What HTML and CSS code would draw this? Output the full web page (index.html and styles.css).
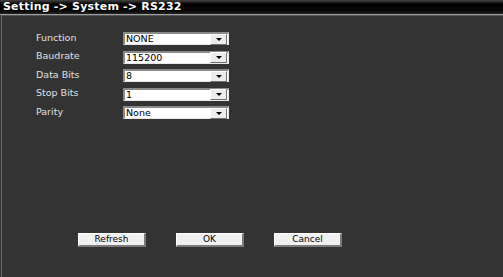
FILE: index.html
```html
<!DOCTYPE html>
<html lang="en">
<head>
    <meta charset="UTF-8">
    <title>Setting - System - RS232</title>
    <link rel="stylesheet" href="styles.css">
</head>
<body>
    <div class="title">Setting -&gt; System -&gt; RS232</div>
    <div class="panel">
        <div class="form">
            <div class="row">
                <label>Function</label>
                <div class="select"><span class="value">NONE</span><span class="arrow"></span></div>
            </div>
            <div class="row">
                <label>Baudrate</label>
                <div class="select"><span class="value">115200</span><span class="arrow"></span></div>
            </div>
            <div class="row">
                <label>Data Bits</label>
                <div class="select"><span class="value">8</span><span class="arrow"></span></div>
            </div>
            <div class="row">
                <label>Stop Bits</label>
                <div class="select"><span class="value">1</span><span class="arrow"></span></div>
            </div>
            <div class="row">
                <label>Parity</label>
                <div class="select"><span class="value">None</span><span class="arrow"></span></div>
            </div>
        </div>
        <div class="buttons">
            <button type="button">Refresh</button>
            <button type="button">OK</button>
            <button type="button">Cancel</button>
        </div>
    </div>
</body>
</html>
```
FILE: styles.css
```css
body, html {
    margin: 0;
    padding: 0;
    background: #333333;
    font-family: "DejaVu Sans", Verdana, sans-serif;
}
.title {
    height: 14px;
    line-height: 14px;
    padding-left: 3px;
    background: linear-gradient(#444444, #000000 30%, #0a0a0a 80%, #222222);
    border-bottom: 1px solid #a0a0a0;
    color: #ffffff;
    font-size: 11px;
    font-weight: bold;
    letter-spacing: 0.2px;
    text-shadow: 1px 1px 0 #000000;
}
.panel {
    height: 262px;
    margin-left: 1px;
    border-top: 1px solid #555555;
    border-left: 1px solid #6a6a6a;
    box-sizing: border-box;
    display: flex;
    flex-direction: column;
}
.form {
    padding: 16px 0 0 34px;
    display: flex;
    flex-direction: column;
    gap: 5.5px;
}
.row {
    display: flex;
    align-items: center;
    height: 13px;
}
.row label {
    width: 87px;
    color: #e0e0e0;
    font-size: 9.5px;
    margin-top: -3px;
}
.select {
    width: 106px;
    height: 13px;
    box-sizing: border-box;
    background: #ffffff;
    border-top: 2px solid #8a8a8a;
    border-left: 2px solid #8a8a8a;
    border-right: 1px solid #e8e8e8;
    border-bottom: 1px solid #e8e8e8;
    display: flex;
    align-items: center;
}
.select .value {
    flex: 1;
    padding-left: 1px;
    font-size: 9.5px;
    color: #000000;
    line-height: 10px;
}
.select .arrow {
    width: 15px;
    height: 9px;
    margin-right: 1px;
    background: #ececec;
    border-top: 1px solid #ffffff;
    border-left: 1px solid #ffffff;
    border-right: 1px solid #707070;
    border-bottom: 1px solid #707070;
    position: relative;
}
.select .arrow::after {
    content: "";
    position: absolute;
    left: 5px;
    top: 3px;
    border-left: 3px solid transparent;
    border-right: 3px solid transparent;
    border-top: 3px solid #000000;
}
.buttons {
    margin-top: auto;
    margin-bottom: 30px;
    padding-left: 76px;
    display: flex;
    gap: 30px;
}
.buttons button {
    width: 68px;
    height: 14px;
    padding: 0;
    background: #f0f0f0;
    border-top: 1px solid #ffffff;
    border-left: 1px solid #ffffff;
    border-right: 2px solid #7a7a7a;
    border-bottom: 2px solid #7a7a7a;
    font-family: "DejaVu Sans", Verdana, sans-serif;
    font-size: 9px;
    line-height: 9px;
    color: #000000;
}
```
